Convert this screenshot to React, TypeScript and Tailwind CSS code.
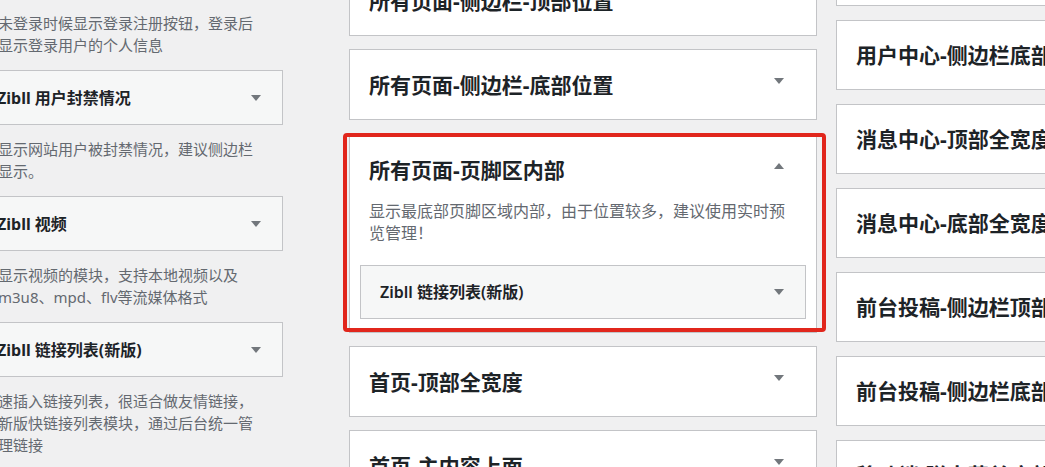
import React from "react";

const FONT = { fontFamily: '"Noto Sans", "Noto Sans CJK SC", sans-serif' };

function Arrow({ up = false, className = "" }: { up?: boolean; className?: string }) {
  return (
    <svg width="10" height="6" viewBox="0 0 10 6" className={"shrink-0 " + className}>
      <polygon points={up ? "0,6 10,6 5,0" : "0,0 10,0 5,6"} fill="#72777c" />
    </svg>
  );
}

function LeftBox({ title }: { title: string }) {
  return (
    <div className="flex h-[55px] items-center justify-between border border-[#c3c4c7] bg-[#f6f7f7] pl-[13px] pr-[21px]">
      <span className="whitespace-nowrap text-[16px] font-bold leading-[24px] text-[#1d2327]">{title}</span>
      <Arrow />
    </div>
  );
}

function LeftDesc({ lines, mt = true }: { lines: string[]; mt?: boolean }) {
  return (
    <div className={(mt ? "mt-[13px] " : "") + "mb-[14px] pl-[15px] text-[15px] leading-[22px] text-[#646970]"}>
      {lines.map((l, i) => (
        <div key={i} className="whitespace-nowrap">
          {l}
        </div>
      ))}
    </div>
  );
}

function SideBox({ title, h = "h-[71px]" }: { title: string; h?: string }) {
  return (
    <div className={"flex shrink-0 items-center justify-between border border-[#c3c4c7] bg-white pl-[19px] pr-[32px] " + h}>
      <span className="whitespace-nowrap text-[21px] font-bold leading-[30px] text-[#1d2327]">{title}</span>
      <Arrow className="-mt-[8px]" />
    </div>
  );
}

export default function App() {
  return (
    <div className="flex h-[467px] w-[1045px] overflow-hidden bg-[#f0f0f1]" style={FONT}>
      {/* Left column: available widgets */}
      <div className="-ml-[17px] w-[300px] shrink-0 pt-[12px]">
        <LeftDesc mt={false} lines={["未登录时候显示登录注册按钮，登录后", "显示登录用户的个人信息"]} />
        <LeftBox title="Zibll 用户封禁情况" />
        <LeftDesc lines={["显示网站用户被封禁情况，建议侧边栏", "显示。"]} />
        <LeftBox title="Zibll 视频" />
        <LeftDesc lines={["显示视频的模块，支持本地视频以及", "m3u8、mpd、flv等流媒体格式"]} />
        <LeftBox title="Zibll 链接列表(新版)" />
        <LeftDesc lines={["速插入链接列表，很适合做友情链接，", "新版快链接列表模块，通过后台统一管", "理链接"]} />
      </div>

      {/* Middle column: sidebars */}
      <div className="-mt-[35px] ml-[66px] flex w-[468px] shrink-0 flex-col">
        <SideBox title="所有页面-侧边栏-顶部位置" />
        <div className="mt-[13px]">
          <SideBox title="所有页面-侧边栏-底部位置" />
        </div>
        <div className="relative mt-[14px]">
          <div className="border border-[#c3c4c7] bg-white px-[10px] pb-[13px]">
            <div className="flex items-center justify-between pl-[9px] pr-[22px] pt-[20px]">
              <span className="whitespace-nowrap text-[21px] font-bold leading-[30px] text-[#1d2327]">
                所有页面-页脚区内部
              </span>
              <Arrow up className="-mt-[8px]" />
            </div>
            <div className="mt-[15px] pl-[9px] text-[16px] leading-[22px] text-[#646970]">
              <div className="whitespace-nowrap">显示最底部页脚区域内部，由于位置较多，建议使用实时预</div>
              <div className="whitespace-nowrap">览管理！</div>
            </div>
            <div className="mt-[21px] flex h-[54px] items-center justify-between border border-[#c3c4c7] bg-[#f6f7f7] pl-[19px] pr-[21px]">
              <span className="whitespace-nowrap text-[16px] font-semibold leading-[24px] text-[#1d2327]">
                Zibll 链接列表(新版)
              </span>
              <Arrow />
            </div>
          </div>
          <div className="pointer-events-none absolute -left-[6px] -right-[9px] -top-[1px] bottom-[1px] rounded-[4px] border-[4px] border-[#e1261c]" />
        </div>
        <div className="mt-[13px]">
          <SideBox title="首页-顶部全宽度" />
        </div>
        <div className="mt-[13px]">
          <SideBox title="首页-主内容上面" />
        </div>
      </div>

      {/* Right column */}
      <div className="-mt-[64px] ml-[19px] flex w-[468px] shrink-0 flex-col gap-[14px]">
        <SideBox h="h-[70px]" title="用户中心-侧边栏顶部" />
        <SideBox h="h-[70px]" title="用户中心-侧边栏底部" />
        <SideBox h="h-[70px]" title="消息中心-顶部全宽度" />
        <SideBox h="h-[70px]" title="消息中心-底部全宽度" />
        <SideBox h="h-[70px]" title="前台投稿-侧边栏顶部" />
        <SideBox h="h-[70px]" title="前台投稿-侧边栏底部" />
        <SideBox h="h-[70px]" title="移动端-弹出菜单底部" />
      </div>
    </div>
  );
}
